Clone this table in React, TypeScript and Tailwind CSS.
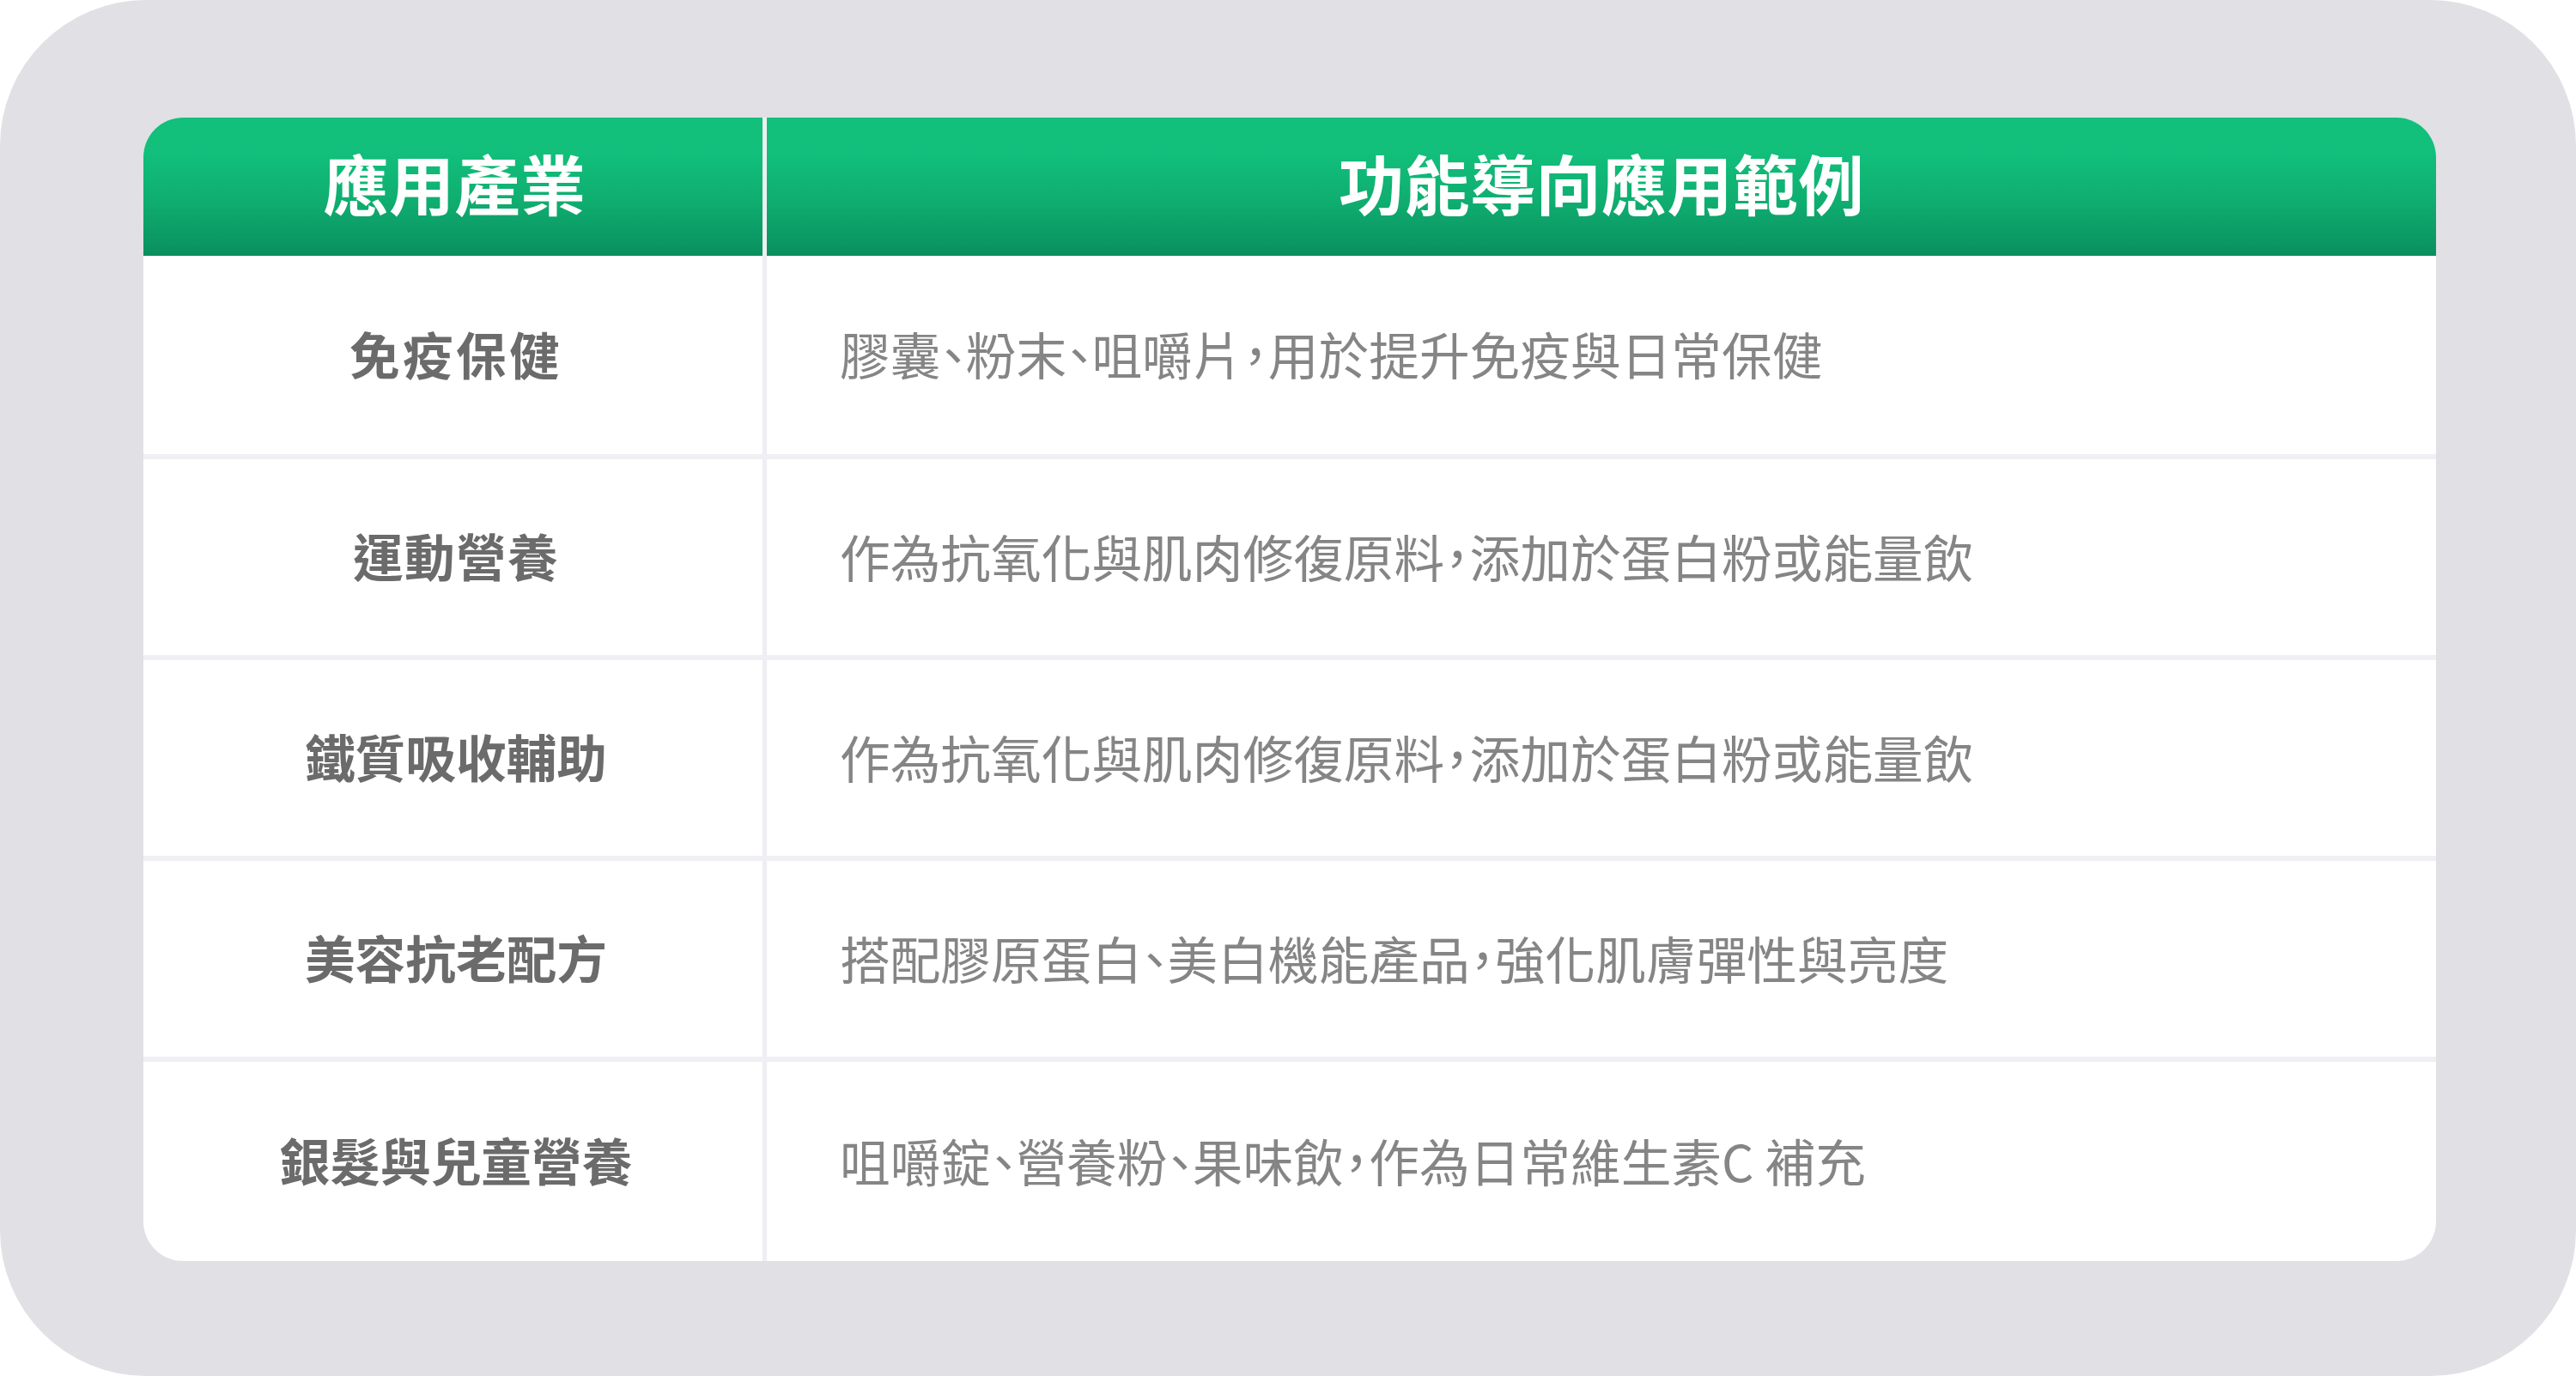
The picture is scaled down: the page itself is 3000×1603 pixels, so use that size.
const rows = [
  {
    name: "免疫保健",
    detail: "膠囊、粉末、咀嚼片，用於提升免疫與日常保健",
    height: "h-[237px]",
    tracking: "tracking-[3.3px]",
  },
  {
    name: "運動營養",
    detail: "作為抗氧化與肌肉修復原料，添加於蛋白粉或能量飲",
    height: "h-[234px]",
    tracking: "tracking-[1.3px]",
  },
  {
    name: "鐵質吸收輔助",
    detail: "作為抗氧化與肌肉修復原料，添加於蛋白粉或能量飲",
    height: "h-[234px]",
    tracking: "tracking-normal",
  },
  {
    name: "美容抗老配方",
    detail: "搭配膠原蛋白、美白機能產品，強化肌膚彈性與亮度",
    height: "h-[234px]",
    tracking: "tracking-normal",
  },
  {
    name: "銀髮與兒童營養",
    detail: "咀嚼錠、營養粉、果味飲，作為日常維生素C 補充",
    height: "h-[232px]",
    tracking: "tracking-normal",
  },
];

export default function App() {
  return (
    <div className="w-[3000px] h-[1603px] bg-white font-['Noto_Sans_CJK_TC','Noto_Sans',sans-serif]">
      <div className="w-full h-full rounded-[170px] bg-[#E1E0E5] pl-[167px] pt-[137px]">
        <div className="w-[2670px] rounded-[46px] overflow-hidden bg-white">
          {/* header */}
          <div className="grid grid-cols-[721px_1fr] h-[161px] bg-gradient-to-b from-[#12BF7B] from-25% via-[#0FAE70] via-60% to-[#0A8F5F]">
            <div className="flex items-center justify-center pb-[12px] pl-[4px] text-white font-bold text-[76px] leading-none tracking-[0.5px]">
              應用產業
            </div>
            <div className="flex items-center justify-center pb-[12px] border-l-[5px] border-[#EEF1F1] text-white font-bold text-[76px] leading-none tracking-[0.5px]">
              功能導向應用範例
            </div>
          </div>

          {rows.map((row, i) => (
            <div
              key={row.name}
              className={`grid grid-cols-[721px_1fr] ${row.height} ${
                i < rows.length - 1 ? "border-b-[6px] border-[#EFEFF4]" : ""
              }`}
            >
              <div
                className={`flex items-center justify-center pl-[7px] pb-[3px] text-[58.7px] leading-none font-bold text-[#6B6B6B] ${row.tracking}`}
              >
                {row.name}
              </div>
              <div className="flex items-center border-l-[5px] border-[#EEEEF3] pl-[85px] pb-[2px] text-[58.7px] leading-none text-[#858585] [font-feature-settings:'halt']">
                {row.detail}
              </div>
            </div>
          ))}
        </div>
      </div>
    </div>
  );
}
